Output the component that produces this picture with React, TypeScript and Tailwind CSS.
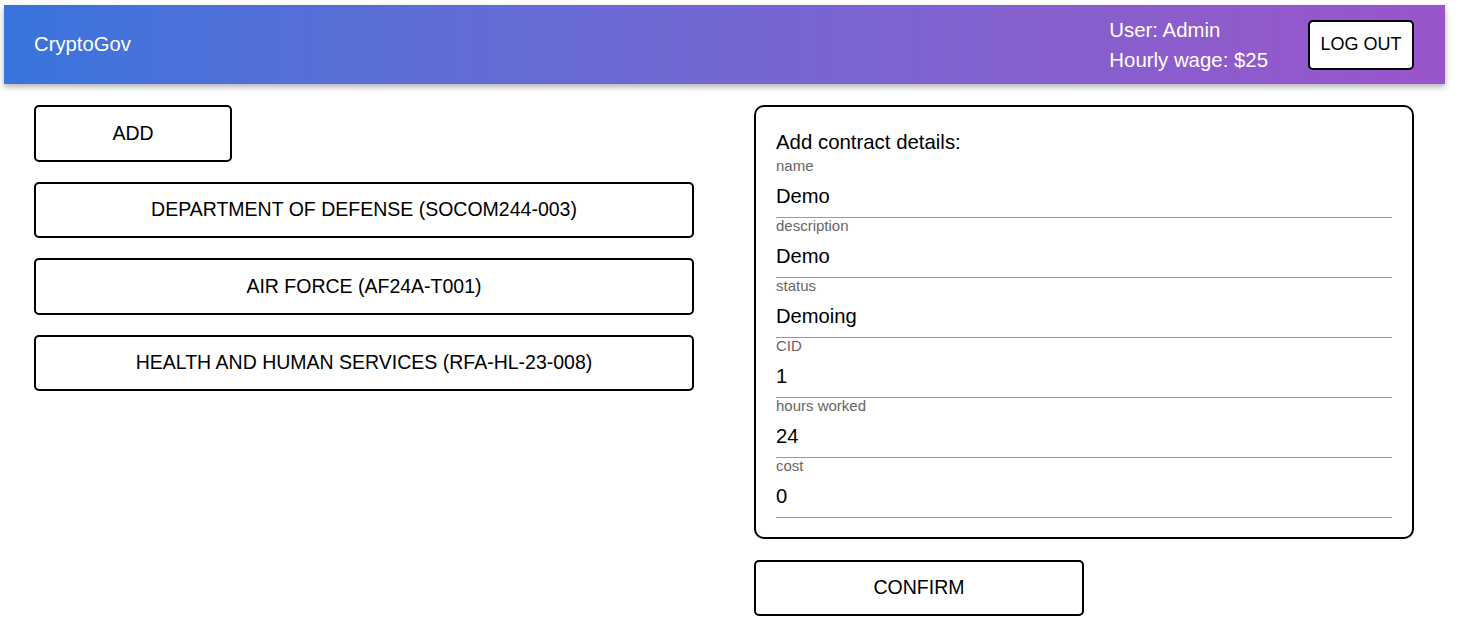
const contracts = [
  'DEPARTMENT OF DEFENSE (SOCOM244-003)',
  'AIR FORCE (AF24A-T001)',
  'HEALTH AND HUMAN SERVICES (RFA-HL-23-008)',
];

const fields = [
  { label: 'name', value: 'Demo' },
  { label: 'description', value: 'Demo' },
  { label: 'status', value: 'Demoing' },
  { label: 'CID', value: '1' },
  { label: 'hours worked', value: '24' },
  { label: 'cost', value: '0' },
];

function Field({ label, value }: { label: string; value: string }) {
  return (
    <div className="flex flex-col">
      <label className="text-[15px] leading-[16px] text-[#666]">{label}</label>
      <input
        readOnly
        value={value}
        className="h-[44px] border-b border-[#999] bg-transparent pt-[1px] text-[20.2px] text-black outline-none"
      />
    </div>
  );
}

export default function App() {
  return (
    <div
      className="min-h-screen bg-white pl-[4px] pt-[5px] text-black"
      style={{ fontFamily: '"Liberation Sans", Arial, sans-serif' }}
    >
      <header className="flex h-[79px] w-[1441px] items-center justify-between bg-gradient-to-r from-[#3774dc] to-[#9955c9] pl-[30px] pr-[31px] text-white shadow-[0_3px_6px_rgba(0,0,0,0.3)]">
        <div className="text-[20.3px]">CryptoGov</div>
        <div className="flex items-center gap-[40px]">
          <div className="text-[20.4px] leading-[30px]">
            <div>User: Admin</div>
            <div>Hourly wage: $25</div>
          </div>
          <button className="h-[50px] w-[106px] rounded-[5px] border-2 border-black bg-white text-[18px] text-black">
            LOG OUT
          </button>
        </div>
      </header>

      <main className="flex gap-[60px] pl-[30px] pt-[21px]">
        <div className="flex w-[660px] flex-col gap-[20px]">
          <button className="h-[56.5px] w-[198px] rounded-[5px] border-2 border-black bg-white text-[19.5px]">
            ADD
          </button>
          {contracts.map((c) => (
            <button key={c} className="h-[56.5px] w-full rounded-[5px] border-2 border-black bg-white text-[19.5px]">
              {c}
            </button>
          ))}
        </div>

        <div className="flex w-[660px] flex-col gap-[20.5px]">
          <div className="rounded-[10px] border-2 border-black px-[20px] pb-[19px] pt-[23px]">
            <div className="mb-[4px] text-[20.4px] leading-[24px]">Add contract details:</div>
            {fields.map((f) => (
              <Field key={f.label} label={f.label} value={f.value} />
            ))}
          </div>
          <button className="h-[56.5px] w-[330px] rounded-[5px] border-2 border-black bg-white text-[19.5px]">
            CONFIRM
          </button>
        </div>
      </main>
    </div>
  );
}
